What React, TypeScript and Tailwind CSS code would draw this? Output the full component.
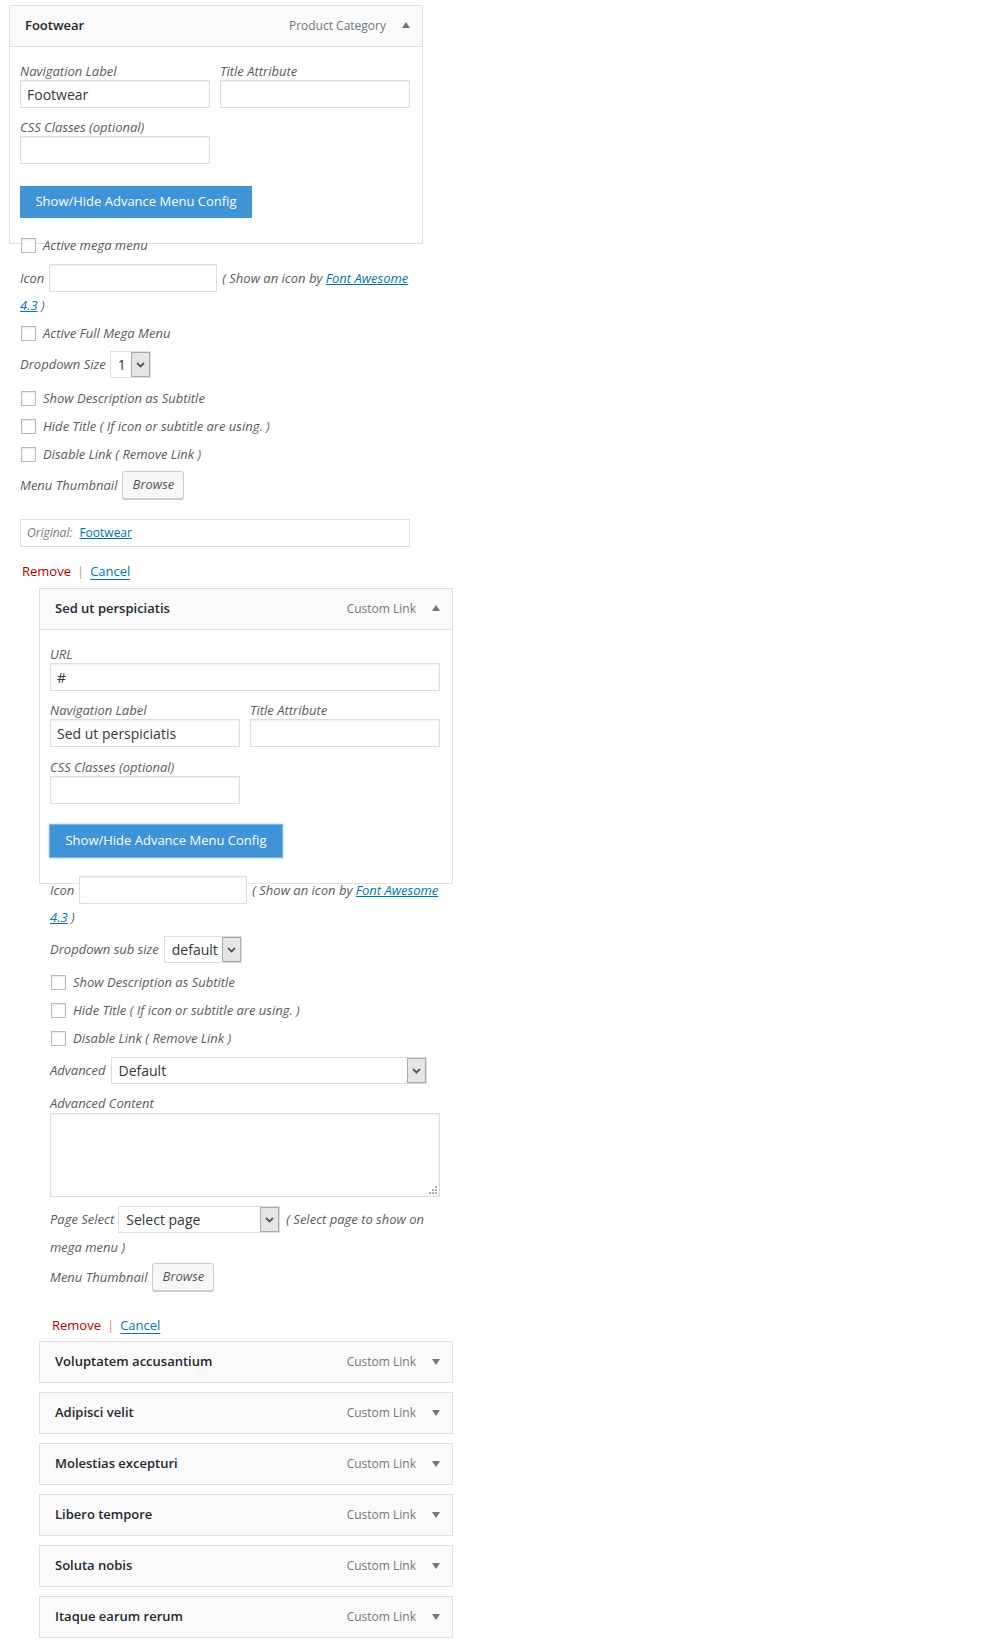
import React from "react";

const LABEL = "text-[13px] italic text-[#5a5a5a] leading-[17px] whitespace-nowrap";

function Arrow({ up }: { up?: boolean }) {
  return (
    <svg width="8" height="6" viewBox="0 0 8 6" className={up ? "-mt-[2px]" : ""}>
      {up ? <polygon points="0,6 4,0 8,6" fill="#72777c" /> : <polygon points="0,0 8,0 4,6" fill="#72777c" />}
    </svg>
  );
}

function Header({ title, type, up }: { title: string; type: string; up?: boolean }) {
  return (
    <div className="h-[42px] border border-[#dfdfdf] bg-[#fafafa] flex items-center pl-[15px] pr-[12px]">
      <div className="flex-1 text-[13px] font-semibold text-[#23282d]">{title}</div>
      <div className="text-[12px] text-[#72777c] mr-[16px]">{type}</div>
      <Arrow up={up} />
    </div>
  );
}

function Input({ value, w }: { value?: string; w: string }) {
  return (
    <div
      className={`h-[28px] ${w} border border-[#ddd] bg-white shadow-[inset_0_1px_2px_rgba(0,0,0,0.07)] flex items-center pl-[6px] text-[14px] text-[#32373c]`}
    >
      {value}
    </div>
  );
}

function Chevron() {
  return (
    <svg width="9" height="6" viewBox="0 0 9 6">
      <polyline points="1,1 4.5,4.5 8,1" fill="none" stroke="#555" strokeWidth="1.8" />
    </svg>
  );
}

function Select({ value, w }: { value: string; w: string }) {
  return (
    <div className={`h-[27px] ${w} border border-[#ddd] bg-white flex items-stretch`}>
      <div className="flex-1 flex items-center pl-[7px] text-[14px] text-[#32373c] whitespace-nowrap overflow-hidden">{value}</div>
      <div className="w-[19px] border border-[#aaa] bg-[#e5e5e5] flex items-center justify-center">
        <Chevron />
      </div>
    </div>
  );
}

function Checkbox({ label, cls }: { label: string; cls: string }) {
  return (
    <div className={`${cls} flex items-center`}>
      <span className="ml-[1px] w-[15px] h-[15px] border border-[#b4b9be] bg-white shadow-[inset_0_1px_2px_rgba(0,0,0,0.1)]" />
      <span className={`${LABEL} ml-[7px]`}>{label}</span>
    </div>
  );
}

function Browse({ cls }: { cls: string }) {
  return (
    <div className={`${cls} h-[28px] flex items-center`}>
      <span className={LABEL}>Menu Thumbnail</span>
      <div className="ml-[5px] w-[62px] h-[28px] border border-[#ccc] rounded-[3px] bg-[#f7f7f7] shadow-[0_1px_0_#ccc] italic text-[13px] text-[#555] flex items-center justify-center">
        Browse
      </div>
    </div>
  );
}

function Actions({ cls }: { cls: string }) {
  return (
    <div className={`${cls} h-[18px] flex items-center pl-[13px] text-[13px]`}>
      <span className="text-[#a00]">Remove</span>
      <span className="mx-[6px] text-[#c49a70]">|</span>
      <span className="text-[#0073aa] underline underline-offset-[3px]">Cancel</span>
    </div>
  );
}

function IconRows({ first, second }: { first: string; second: string }) {
  return (
    <>
      <div className={`${first} h-[28px] flex items-center`}>
        <span className={LABEL}>Icon</span>
        <div className="ml-[5px]">
          <Input w="w-[168px]" />
        </div>
        <span className={`${LABEL} ml-[5px]`}>
          ( Show an icon by <span className="text-[#0073aa] underline">Font Awesome</span>
        </span>
      </div>
      <div className={`${second} h-[18px] flex items-center`}>
        <span className={LABEL}>
          <span className="text-[#0073aa] underline">4.3</span> )
        </span>
      </div>
    </>
  );
}

function Grip() {
  return (
    <svg width="10" height="10" viewBox="0 0 10 10" className="absolute right-[2px] bottom-[2px]">
      <rect x="8" y="2" width="2" height="2" fill="#aaa" />
      <rect x="5" y="5" width="2" height="2" fill="#aaa" />
      <rect x="8" y="5" width="2" height="2" fill="#aaa" />
      <rect x="2" y="8" width="2" height="2" fill="#aaa" />
      <rect x="5" y="8" width="2" height="2" fill="#aaa" />
      <rect x="8" y="8" width="2" height="2" fill="#aaa" />
    </svg>
  );
}

export default function App() {
  const collapsed = [
    "Voluptatem accusantium",
    "Adipisci velit",
    "Molestias excepturi",
    "Libero tempore",
    "Soluta nobis",
    "Itaque earum rerum",
  ];
  return (
    <div className="font-['Open_Sans',sans-serif] bg-white pt-[5px] pb-[5px] text-[#444]">
      {/* Item 1 */}
      <div className="ml-[9px] w-[414px]">
        <Header title="Footwear" type="Product Category" up />
        <div className="border-x border-b border-[#dfdfdf] bg-white pt-[16px] pb-[25px] px-[10px]">
          <div className="flex gap-[10px]">
            <div>
              <div className={LABEL}>Navigation Label</div>
              <Input value="Footwear" w="w-[190px]" />
            </div>
            <div>
              <div className={LABEL}>Title Attribute</div>
              <Input w="w-[190px]" />
            </div>
          </div>
          <div className={`${LABEL} mt-[11px]`}>CSS Classes (optional)</div>
          <Input w="w-[190px]" />
          <div className="mt-[22px] w-[232px] h-[32px] bg-[#3e94d7] text-white text-[13px] flex items-center justify-center">
            Show/Hide Advance Menu Config
          </div>
        </div>
        <div className="pl-[11px]">
          <Checkbox label="Active mega menu" cls="-mt-[8px] h-[19px] relative" />
          <IconRows first="mt-[9px]" second="mt-[4px]" />
          <Checkbox label="Active Full Mega Menu" cls="mt-[10px] h-[18px]" />
          <div className="mt-[9px] h-[27px] flex items-center">
            <span className={LABEL}>Dropdown Size</span>
            <div className="ml-[4px]">
              <Select value="1" w="w-[41px]" />
            </div>
          </div>
          <Checkbox label="Show Description as Subtitle" cls="mt-[11px] h-[18px]" />
          <Checkbox label="Hide Title ( If icon or subtitle are using. )" cls="mt-[10px] h-[18px]" />
          <Checkbox label="Disable Link ( Remove Link )" cls="mt-[10px] h-[18px]" />
          <Browse cls="mt-[8px]" />
          <div className="mt-[20px] w-[390px] h-[28px] border border-[#ddd] flex items-center pl-[6px] text-[12px]">
            <span className="italic text-[#777]">Original:</span>
            <span className="ml-[7px] text-[#0073aa] underline">Footwear</span>
          </div>
        </div>
        <Actions cls="mt-[16px]" />
      </div>

      {/* Item 2 */}
      <div className="ml-[39px] w-[414px] mt-[7px]">
        <Header title="Sed ut perspiciatis" type="Custom Link" up />
        <div className="border-x border-b border-[#dfdfdf] bg-white pt-[16px] pb-[26px] px-[10px]">
          <div className={LABEL}>URL</div>
          <Input value="#" w="w-[390px]" />
          <div className="flex gap-[10px] mt-[11px]">
            <div>
              <div className={LABEL}>Navigation Label</div>
              <Input value="Sed ut perspiciatis" w="w-[190px]" />
            </div>
            <div>
              <div className={LABEL}>Title Attribute</div>
              <Input w="w-[190px]" />
            </div>
          </div>
          <div className={`${LABEL} mt-[12px]`}>CSS Classes (optional)</div>
          <Input w="w-[190px]" />
          <div className="mt-[21px] w-[232px] h-[32px] bg-[#3e94d7] text-white text-[13px] flex items-center justify-center shadow-[0_0_0_1px_#7fb4e3,0_0_2px_1px_rgba(30,140,190,0.5)]">
            Show/Hide Advance Menu Config
          </div>
        </div>
        <div className="pl-[11px]">
          <IconRows first="-mt-[8px] relative" second="mt-[4px]" />
          <div className="mt-[10px] h-[27px] flex items-center">
            <span className={LABEL}>Dropdown sub size</span>
            <div className="ml-[5px]">
              <Select value="default" w="w-[78px]" />
            </div>
          </div>
          <Checkbox label="Show Description as Subtitle" cls="mt-[10px] h-[18px]" />
          <Checkbox label="Hide Title ( If icon or subtitle are using. )" cls="mt-[10px] h-[18px]" />
          <Checkbox label="Disable Link ( Remove Link )" cls="mt-[10px] h-[18px]" />
          <div className="mt-[10px] h-[27px] flex items-center">
            <span className={LABEL}>Advanced</span>
            <div className="ml-[5px]">
              <Select value="Default" w="w-[316px]" />
            </div>
          </div>
          <div className={`${LABEL} mt-[10px] h-[18px] flex items-center`}>Advanced Content</div>
          <div className="mt-[1px] relative w-[390px] h-[84px] border border-[#ddd] bg-white shadow-[inset_0_1px_2px_rgba(0,0,0,0.07)]">
            <Grip />
          </div>
          <div className="mt-[9px] h-[27px] flex items-center">
            <span className={LABEL}>Page Select</span>
            <div className="ml-[4px]">
              <Select value="Select page" w="w-[162px]" />
            </div>
            <span className={`${LABEL} ml-[6px]`}>( Select page to show on</span>
          </div>
          <div className={`${LABEL} mt-[5px] h-[18px] flex items-center`}>mega menu )</div>
          <Browse cls="mt-[7px]" />
        </div>
        <Actions cls="mt-[26px]" />
        <div className="mt-[6px] flex flex-col gap-[9px]">
          {collapsed.map((t) => (
            <Header key={t} title={t} type="Custom Link" />
          ))}
        </div>
      </div>
    </div>
  );
}
